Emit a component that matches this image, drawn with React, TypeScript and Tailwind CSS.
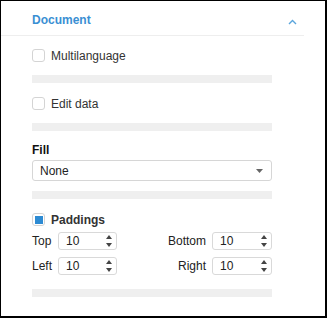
import React from "react";

function Check({ checked, label, bold }: { checked?: boolean; label: string; bold?: boolean }) {
  return (
    <div className="flex items-center h-[13px]">
      <span className="w-[13px] h-[13px] rounded-[3px] border border-[#d4d4d4] bg-white flex items-center justify-center">
        {checked && <span className="w-[8px] h-[8px] bg-[#2d8bd3]" />}
      </span>
      <span className={`ml-[6px] text-[12px] leading-none text-[#333] ${bold ? "font-bold" : ""}`}>{label}</span>
    </div>
  );
}

function Bar({ mt }: { mt: string }) {
  return <div className={`${mt} h-[8px] w-[240px] bg-[#efefef]`} />;
}

function Spin({ value, w }: { value: string; w: string }) {
  return (
    <div className={`${w} h-[18px] rounded-[3px] border border-[#d9d9d9] bg-white flex items-center pl-[7px] pr-[4px]`}>
      <span className="flex-1 text-[12px] text-[#222]">{value}</span>
      <span className="flex flex-col items-center gap-[4px]">
        <svg width="6" height="4" viewBox="0 0 6 4"><path d="M0 4 L3 0 L6 4 Z" fill="#444" /></svg>
        <svg width="6" height="4" viewBox="0 0 6 4"><path d="M0 0 L3 4 L6 0 Z" fill="#444" /></svg>
      </span>
    </div>
  );
}

export default function App() {
  return (
    <div
      className="w-[327px] h-[318px] bg-white border-l border-t border-r-2 border-b-2 border-black"
      style={{ fontFamily: '"Liberation Sans", Arial, sans-serif' }}
    >
      <div className="w-[303px] h-[35px] border-b border-[#eeeeee] flex items-center justify-between pl-[31px] pr-[7px] pt-[4px]">
        <span className="text-[12px] font-bold text-[#3a8fd3] leading-none">Document</span>
        <svg width="9" height="6" viewBox="0 0 9 6" className="mt-[3px]">
          <path d="M1 5 L4.5 1.5 L8 5" fill="none" stroke="#5aa5dc" strokeWidth="1.4" />
        </svg>
      </div>
      <div className="pl-[31px] w-[272px]">
        <div className="mt-[13px]">
          <Check label="Multilanguage" />
        </div>
        <Bar mt="mt-[13px]" />
        <div className="mt-[14px]">
          <Check label="Edit data" />
        </div>
        <Bar mt="mt-[13px]" />
        <div className="mt-[12px] h-[14px] flex items-center text-[12px] font-bold text-[#111]">Fill</div>
        <div className="mt-[3px] w-[240px] h-[21px] rounded-[3px] border border-[#d6d6d6] flex items-center pl-[7px] pr-[8px]">
          <span className="flex-1 text-[12px] text-[#222]">None</span>
          <svg width="7" height="4" viewBox="0 0 7 4"><path d="M0 0 L7 0 L3.5 4 Z" fill="#666" /></svg>
        </div>
        <Bar mt="mt-[10px]" />
        <div className="mt-[14px]">
          <Check checked bold label="Paddings" />
        </div>
        <div className="mt-[6px] w-[240px] flex items-center justify-between">
          <div className="flex items-center">
            <span className="w-[26px] text-[12px] text-[#222]">Top</span>
            <Spin value="10" w="w-[59px]" />
          </div>
          <div className="flex items-center">
            <span className="mr-[6px] text-[12px] text-[#222]">Bottom</span>
            <Spin value="10" w="w-[60px]" />
          </div>
        </div>
        <div className="mt-[7px] w-[240px] flex items-center justify-between">
          <div className="flex items-center">
            <span className="w-[26px] text-[12px] text-[#222]">Left</span>
            <Spin value="10" w="w-[59px]" />
          </div>
          <div className="flex items-center">
            <span className="mr-[6px] text-[12px] text-[#222]">Right</span>
            <Spin value="10" w="w-[60px]" />
          </div>
        </div>
        <Bar mt="mt-[14px]" />
      </div>
    </div>
  );
}
